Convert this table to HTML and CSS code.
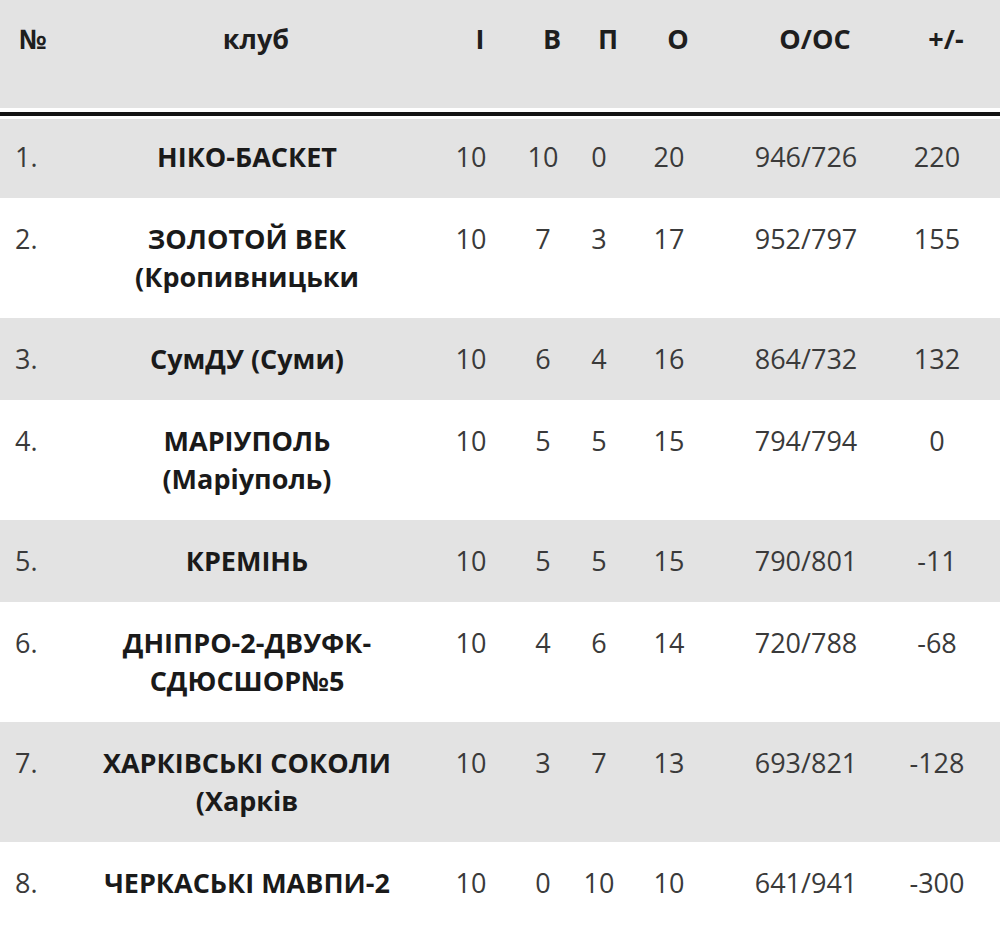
FILE: index.html
```html
<!DOCTYPE html>
<html lang="uk">
<head>
<meta charset="utf-8">
<title>Турнірна таблиця</title>
<link rel="stylesheet" href="styles.css">
</head>
<body>
<table class="standings">
  <colgroup>
    <col class="c-pos">
    <col class="c-club">
    <col class="c-i">
    <col class="c-w">
    <col class="c-l">
    <col class="c-pts">
    <col class="c-score">
    <col class="c-diff">
  </colgroup>
  <thead>
    <tr>
      <th class="pos">№</th>
      <th>клуб</th>
      <th>І</th>
      <th>В</th>
      <th>П</th>
      <th>О</th>
      <th>О/ОС</th>
      <th class="diff">+/-</th>
    </tr>
  </thead>
  <tbody>
    <tr class="odd">
      <td class="pos">1.</td><td class="club">НІКО-БАСКЕТ</td><td>10</td><td>10</td><td>0</td><td>20</td><td>946/726</td><td class="diff">220</td>
    </tr>
    <tr>
      <td class="pos">2.</td><td class="club">ЗОЛОТОЙ ВЕК (Кропивницьки</td><td>10</td><td>7</td><td>3</td><td>17</td><td>952/797</td><td class="diff">155</td>
    </tr>
    <tr class="odd">
      <td class="pos">3.</td><td class="club">СумДУ (Суми)</td><td>10</td><td>6</td><td>4</td><td>16</td><td>864/732</td><td class="diff">132</td>
    </tr>
    <tr>
      <td class="pos">4.</td><td class="club">МАРІУПОЛЬ (Маріуполь)</td><td>10</td><td>5</td><td>5</td><td>15</td><td>794/794</td><td class="diff">0</td>
    </tr>
    <tr class="odd">
      <td class="pos">5.</td><td class="club">КРЕМІНЬ</td><td>10</td><td>5</td><td>5</td><td>15</td><td>790/801</td><td class="diff">-11</td>
    </tr>
    <tr>
      <td class="pos">6.</td><td class="club">ДНІПРО-2-ДВУФК-СДЮСШОР№5</td><td>10</td><td>4</td><td>6</td><td>14</td><td>720/788</td><td class="diff">-68</td>
    </tr>
    <tr class="odd">
      <td class="pos">7.</td><td class="club">ХАРКІВСЬКІ СОКОЛИ (Харків</td><td>10</td><td>3</td><td>7</td><td>13</td><td>693/821</td><td class="diff">-128</td>
    </tr>
    <tr>
      <td class="pos">8.</td><td class="club">ЧЕРКАСЬКІ МАВПИ-2</td><td>10</td><td>0</td><td>10</td><td>10</td><td>641/941</td><td class="diff">-300</td>
    </tr>
  </tbody>
</table>
</body>
</html>
```

FILE: styles.css
```css
html, body {
  margin: 0;
  padding: 0;
  background: #ffffff;
}

.standings {
  width: 1000px;
  table-layout: fixed;
  border-collapse: separate;
  border-spacing: 0;
  font-family: "Open Sans", "Liberation Sans", sans-serif;
  font-size: 27px;
  line-height: 38px;
  color: #3a3a3a;
}

.c-pos { width: 70px; }
.c-club { width: 354px; }
.c-i { width: 94px; }
.c-w { width: 50px; }
.c-l { width: 62px; }
.c-pts { width: 78px; }
.c-score { width: 196px; }
.c-diff { width: 96px; }

.standings th {
  background: #e3e3e3;
  font-weight: 700;
  color: #1e1e1e;
  text-align: center;
  vertical-align: top;
  padding: 20px 0 50px 18px;
  border-bottom: 4px solid #ffffff;
}

.standings th.pos {
  text-align: left;
  padding-left: 19px;
}

.standings th.diff {
  padding-right: 30px;
}

.standings td {
  text-align: center;
  vertical-align: top;
  padding: 22px 0;
  white-space: nowrap;
}

.standings tbody tr:first-child td {
  border-top: 4px solid #141414;
  box-shadow: inset 0 3px 0 #ffffff;
}

.standings tr.odd td {
  background: #e3e3e3;
}

.standings td.pos {
  text-align: left;
  padding-left: 15px;
}

.standings td.club {
  white-space: normal;
  font-weight: 700;
  color: #1a1a1a;
  padding-left: 20px;
  padding-right: 20px;
}

.standings td.diff {
  padding-right: 30px;
}
```
